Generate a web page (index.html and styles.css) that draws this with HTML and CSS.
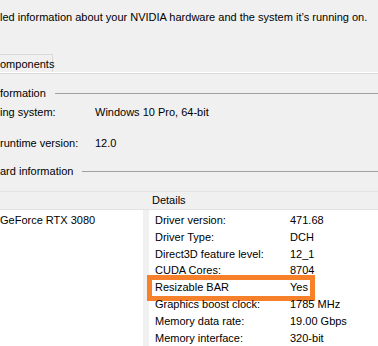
FILE: index.html
```html
<!DOCTYPE html>
<html lang="en">

<head>
  <meta charset="UTF-8">
  <title>System Information</title>
  <link rel="stylesheet" href="styles.css">
</head>

<body>
  <p class="intro">led information about your NVIDIA hardware and the system it’s running on.</p>

  <div class="tabs">
    <div class="tab">omponents</div>
  </div>

  <div class="page">
    <div class="group-title"><span>formation</span><span class="rule"></span></div>
    <div class="info-row"><span class="info-label">ing system:</span><span>Windows 10 Pro, 64-bit</span></div>
    <div class="info-row runtime"><span class="info-label">runtime version:</span><span>12.0</span></div>

    <div class="group-title card"><span>ard information</span><span class="rule"></span></div>

    <div class="table">
      <div class="table-head">
        <div class="head-cell"></div>
        <div class="head-cell details">Details</div>
      </div>
      <div class="table-body">
        <div class="items">
          <div class="item">GeForce RTX 3080</div>
        </div>
        <div class="details-list">
          <div class="detail"><span class="detail-label">Driver version:</span><span>471.68</span></div>
          <div class="detail"><span class="detail-label">Driver Type:</span><span>DCH</span></div>
          <div class="detail"><span class="detail-label">Direct3D feature level:</span><span>12_1</span></div>
          <div class="detail"><span class="detail-label">CUDA Cores:</span><span>8704</span></div>
          <div class="detail highlighted"><span class="detail-label">Resizable BAR</span><span>Yes</span></div>
          <div class="detail"><span class="detail-label">Graphics boost clock:</span><span>1785 MHz</span></div>
          <div class="detail"><span class="detail-label">Memory data rate:</span><span>19.00 Gbps</span></div>
          <div class="detail"><span class="detail-label">Memory interface:</span><span>320-bit</span></div>
        </div>
      </div>
    </div>
  </div>
</body>

</html>
```

FILE: styles.css
```css
body {
  font-family: 'Liberation Sans', Arial, sans-serif;
  font-size: 11px;
  background: #f0f0f0;
  color: #000;
  margin: 0;
  overflow: hidden;
}

.intro {
  margin: 0;
  padding-top: 10px;
  line-height: 14px;
  white-space: nowrap;
}

.tabs {
  display: flex;
  margin-top: 30px;
  border-bottom: 1px solid #ffffff;
}

.tab {
  width: 53px;
  height: 18px;
  line-height: 17px;
  padding-top: 1px;
  border: 1px solid #d9d9d9;
  border-left: none;
  border-bottom: none;
  background: #f0f0f0;
  box-sizing: border-box;
}

.page {
  border-top: 1px solid #d9d9d9;
}

.group-title {
  display: flex;
  align-items: center;
  gap: 9px;
  margin-top: 12px;
  line-height: 14px;
}

.rule {
  flex: 1;
  height: 1px;
  background: #a0a0a0;
  margin-top: 1px;
}

.info-row {
  display: flex;
  margin-top: 5px;
  line-height: 14px;
}

.info-row.runtime {
  margin-top: 17px;
}

.info-label {
  width: 95px;
}

.group-title.card {
  margin-top: 14px;
}

.table {
  margin-top: 13px;
}

.table-head {
  display: flex;
  height: 17px;
  border-top: 1px solid #e3e3e3;
  border-bottom: 1px solid #e3e3e3;
  background: #f0f0f0;
}

.head-cell {
  width: 143px;
  line-height: 17px;
}

.head-cell.details {
  width: auto;
  padding-left: 9px;
}

.table-body {
  display: flex;
  gap: 6px;
  height: 140px;
}

.items {
  width: 143px;
  background: #fff;
  padding-top: 2px;
}

.item {
  line-height: 16.83px;
  white-space: nowrap;
}

.details-list {
  flex: 1;
  background: #fff;
  padding: 2px 0 0 6px;
}

.detail {
  position: relative;
  display: flex;
  line-height: 16.83px;
  white-space: nowrap;
}

.detail-label {
  width: 135px;
}

.highlighted::after {
  content: '';
  position: absolute;
  left: -8px;
  top: -4px;
  width: 168px;
  height: 26px;
  border: 5px solid #f6812a;
  box-sizing: border-box;
}
```
